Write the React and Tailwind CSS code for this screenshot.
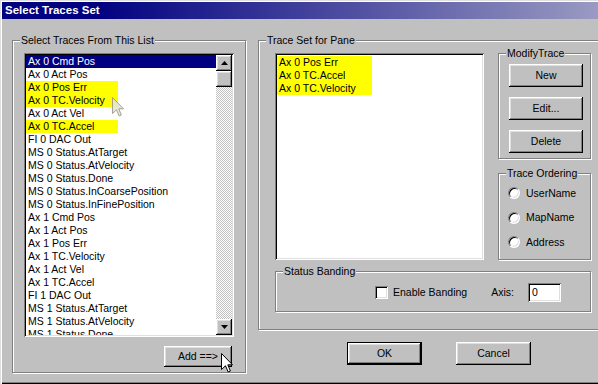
import React from 'react';

const leftRows = [
  { t: 'Ax 0 Cmd Pos', sel: true },
  { t: 'Ax 0 Act Pos' },
  { t: 'Ax 0 Pos Err', hl: true },
  { t: 'Ax 0 TC.Velocity', hl: true },
  { t: 'Ax 0 Act Vel' },
  { t: 'Ax 0 TC.Accel', hl: true },
  { t: 'FI 0 DAC Out' },
  { t: 'MS 0 Status.AtTarget' },
  { t: 'MS 0 Status.AtVelocity' },
  { t: 'MS 0 Status.Done' },
  { t: 'MS 0 Status.InCoarsePosition' },
  { t: 'MS 0 Status.InFinePosition' },
  { t: 'Ax 1 Cmd Pos' },
  { t: 'Ax 1 Act Pos' },
  { t: 'Ax 1 Pos Err' },
  { t: 'Ax 1 TC.Velocity' },
  { t: 'Ax 1 Act Vel' },
  { t: 'Ax 1 TC.Accel' },
  { t: 'FI 1 DAC Out' },
  { t: 'MS 1 Status.AtTarget' },
  { t: 'MS 1 Status.AtVelocity' },
  { t: 'MS 1 Status.Done' },
];

const paneRows = ['Ax 0 Pos Err', 'Ax 0 TC.Accel', 'Ax 0 TC.Velocity'];

const raised =
  'bg-[#c0c0c0] shadow-[inset_-1px_-1px_0_#000,inset_1px_1px_0_#fff,inset_-2px_-2px_0_#808080,inset_2px_2px_0_#dfdfdf]';
const sunken =
  'bg-white shadow-[inset_1px_1px_0_#808080,inset_-1px_-1px_0_#fff,inset_2px_2px_0_#000,inset_-2px_-2px_0_#dfdfdf]';
const etched = 'relative shrink-0 border border-[#808080] shadow-[inset_1px_1px_0_#fff,1px_1px_0_#fff]';

function Group({ label, className, children }) {
  return (
    <div className={`${etched} ${className}`}>
      <span className="absolute left-[7px] top-[-8px] bg-[#c0c0c0] px-[1px] leading-[14px] whitespace-nowrap">
        {label}
      </span>
      {children}
    </div>
  );
}

function Button({ children, className = '', isDefault }) {
  return (
    <div
      className={`${raised} shrink-0 flex items-center justify-center leading-none ${isDefault ? 'border border-black' : ''} ${className}`}
    >
      {children}
    </div>
  );
}

function Arrow({ down }) {
  return (
    <div className={`${raised} w-[16px] h-[16px] flex items-center justify-center`}>
      <svg width="7" height="4" viewBox="0 0 7 4">
        {down ? <polygon points="0,0 7,0 3.5,4" fill="#000" /> : <polygon points="3.5,0 7,4 0,4" fill="#000" />}
      </svg>
    </div>
  );
}

function Cursor({ ghost, className }) {
  return (
    <svg className={className} width="13" height="20" viewBox="0 0 13 20">
      <path
        d="M0.5 0.5 L0.5 16.5 L4.5 12.8 L7.2 19 L9.4 18 L6.8 11.8 L11.5 11.8 Z"
        fill={ghost ? '#e6e6d8' : '#fff'}
        stroke={ghost ? '#9a9888' : '#000'}
        strokeWidth="1"
        opacity={ghost ? 0.9 : 1}
      />
    </svg>
  );
}

function Radio({ label }) {
  return (
    <div className="flex items-center h-[12px] gap-[6px]">
      <div className="w-[12px] h-[12px] rounded-full bg-white border border-t-[#808080] border-l-[#808080] border-r-white border-b-white shadow-[inset_1px_1px_0_#000,inset_-1px_-1px_0_#dfdfdf]" />
      <span className="leading-none">{label}</span>
    </div>
  );
}

export default function App() {
  return (
    <div className="relative w-[598px] h-[384px] overflow-hidden bg-[#c0c0c0] pt-[2px] pl-[2px] text-[10.5px] text-black font-['Liberation_Sans',Arial,sans-serif] shadow-[inset_1px_1px_0_#dfdfdf,inset_2px_2px_0_#fff,inset_0_-1px_0_#000,inset_0_-2px_0_#808080]">
      <div className="h-[17px] flex items-center pl-[3px] text-white font-bold text-[11.5px] bg-[linear-gradient(90deg,#000080_0%,#000080_15%,#9a9ac2_100%)]">
        Select Traces Set
      </div>

      <div className="flex pl-[10px] pt-[21px]">
        <Group label="Select Traces From This List" className="w-[234px] h-[333px] pl-[11px] pt-[12px]">
          <div className={`${sunken} w-[210px] h-[284px] p-[2px] flex`}>
            <div className="flex-1 overflow-hidden relative">
              {leftRows.map((r, i) => (
                <div
                  key={i}
                  className={`h-[13px] leading-[13px] whitespace-nowrap ${r.sel ? 'bg-[#000080] text-white pl-[2px]' : ''}`}
                >
                  {r.hl ? <div className="w-[92px] bg-[#ffff00] pl-[2px]">{r.t}</div> : r.sel ? r.t : <div className="pl-[2px]">{r.t}</div>}
                </div>
              ))}
              <Cursor ghost className="absolute left-[86px] top-[42px]" />
            </div>
            <div className="w-[16px] flex flex-col">
              <Arrow />
              <div className={`${raised} w-[16px] h-[16px]`} />
              <div className="flex-1 bg-[repeating-conic-gradient(#c0c0c0_0_25%,#ffffff_0_50%)] bg-[length:2px_2px]" />
              <Arrow down />
            </div>
          </div>
          <Button className="ml-[140px] mt-[9px] w-[68px] h-[21px]">Add ==&gt;</Button>
        </Group>

        <div className="ml-[12px] shrink-0 flex flex-col">
          <Group label="Trace Set for Pane" className="w-[350px] h-[290px] pl-[16px] pt-[12px]">
            <div className="flex">
              <div className={`${sunken} shrink-0 w-[209px] h-[207px] p-[2px]`}>
                {paneRows.map((t) => (
                  <div key={t} className="w-[95px] h-[13px] leading-[13px] bg-[#ffff00] pl-[2px] whitespace-nowrap first:mt-[1px]">
                    {t}
                  </div>
                ))}
              </div>
              <div className="ml-[14px] flex flex-col">
                <Group label="ModifyTrace" className="w-[93px] h-[106px] pl-[10px] pt-[10px] flex flex-col gap-[10px]">
                  <Button className="w-[74px] h-[23px]">New</Button>
                  <Button className="w-[74px] h-[23px]">Edit...</Button>
                  <Button className="w-[74px] h-[23px]">Delete</Button>
                </Group>
                <Group label="Trace Ordering" className="mt-[14px] w-[93px] h-[87px] pl-[9px] pt-[13px] flex flex-col gap-[12.5px]">
                  <Radio label="UserName" />
                  <Radio label="MapName" />
                  <Radio label="Address" />
                </Group>
              </div>
            </div>
            <Group label="Status Banding" className="mt-[11px] w-[316px] h-[41px] flex items-center pl-[99px] pt-[2px]">
              <div className={`${sunken} shrink-0 w-[13px] h-[13px]`} />
              <span className="ml-[5px]">Enable Banding</span>
              <span className="ml-[24px]">Axis:</span>
              <div className={`${sunken} shrink-0 ml-[14px] w-[33px] h-[19px] pl-[4px] flex items-center`}>0</div>
            </Group>
          </Group>

          <div className="flex mt-[12px] pl-[89px] gap-[34px]">
            <Button isDefault className="w-[75px] h-[23px]">OK</Button>
            <Button className="w-[75px] h-[23px]">Cancel</Button>
          </div>
        </div>
      </div>

      <Cursor className="absolute left-[221px] top-[353px]" />
    </div>
  );
}
